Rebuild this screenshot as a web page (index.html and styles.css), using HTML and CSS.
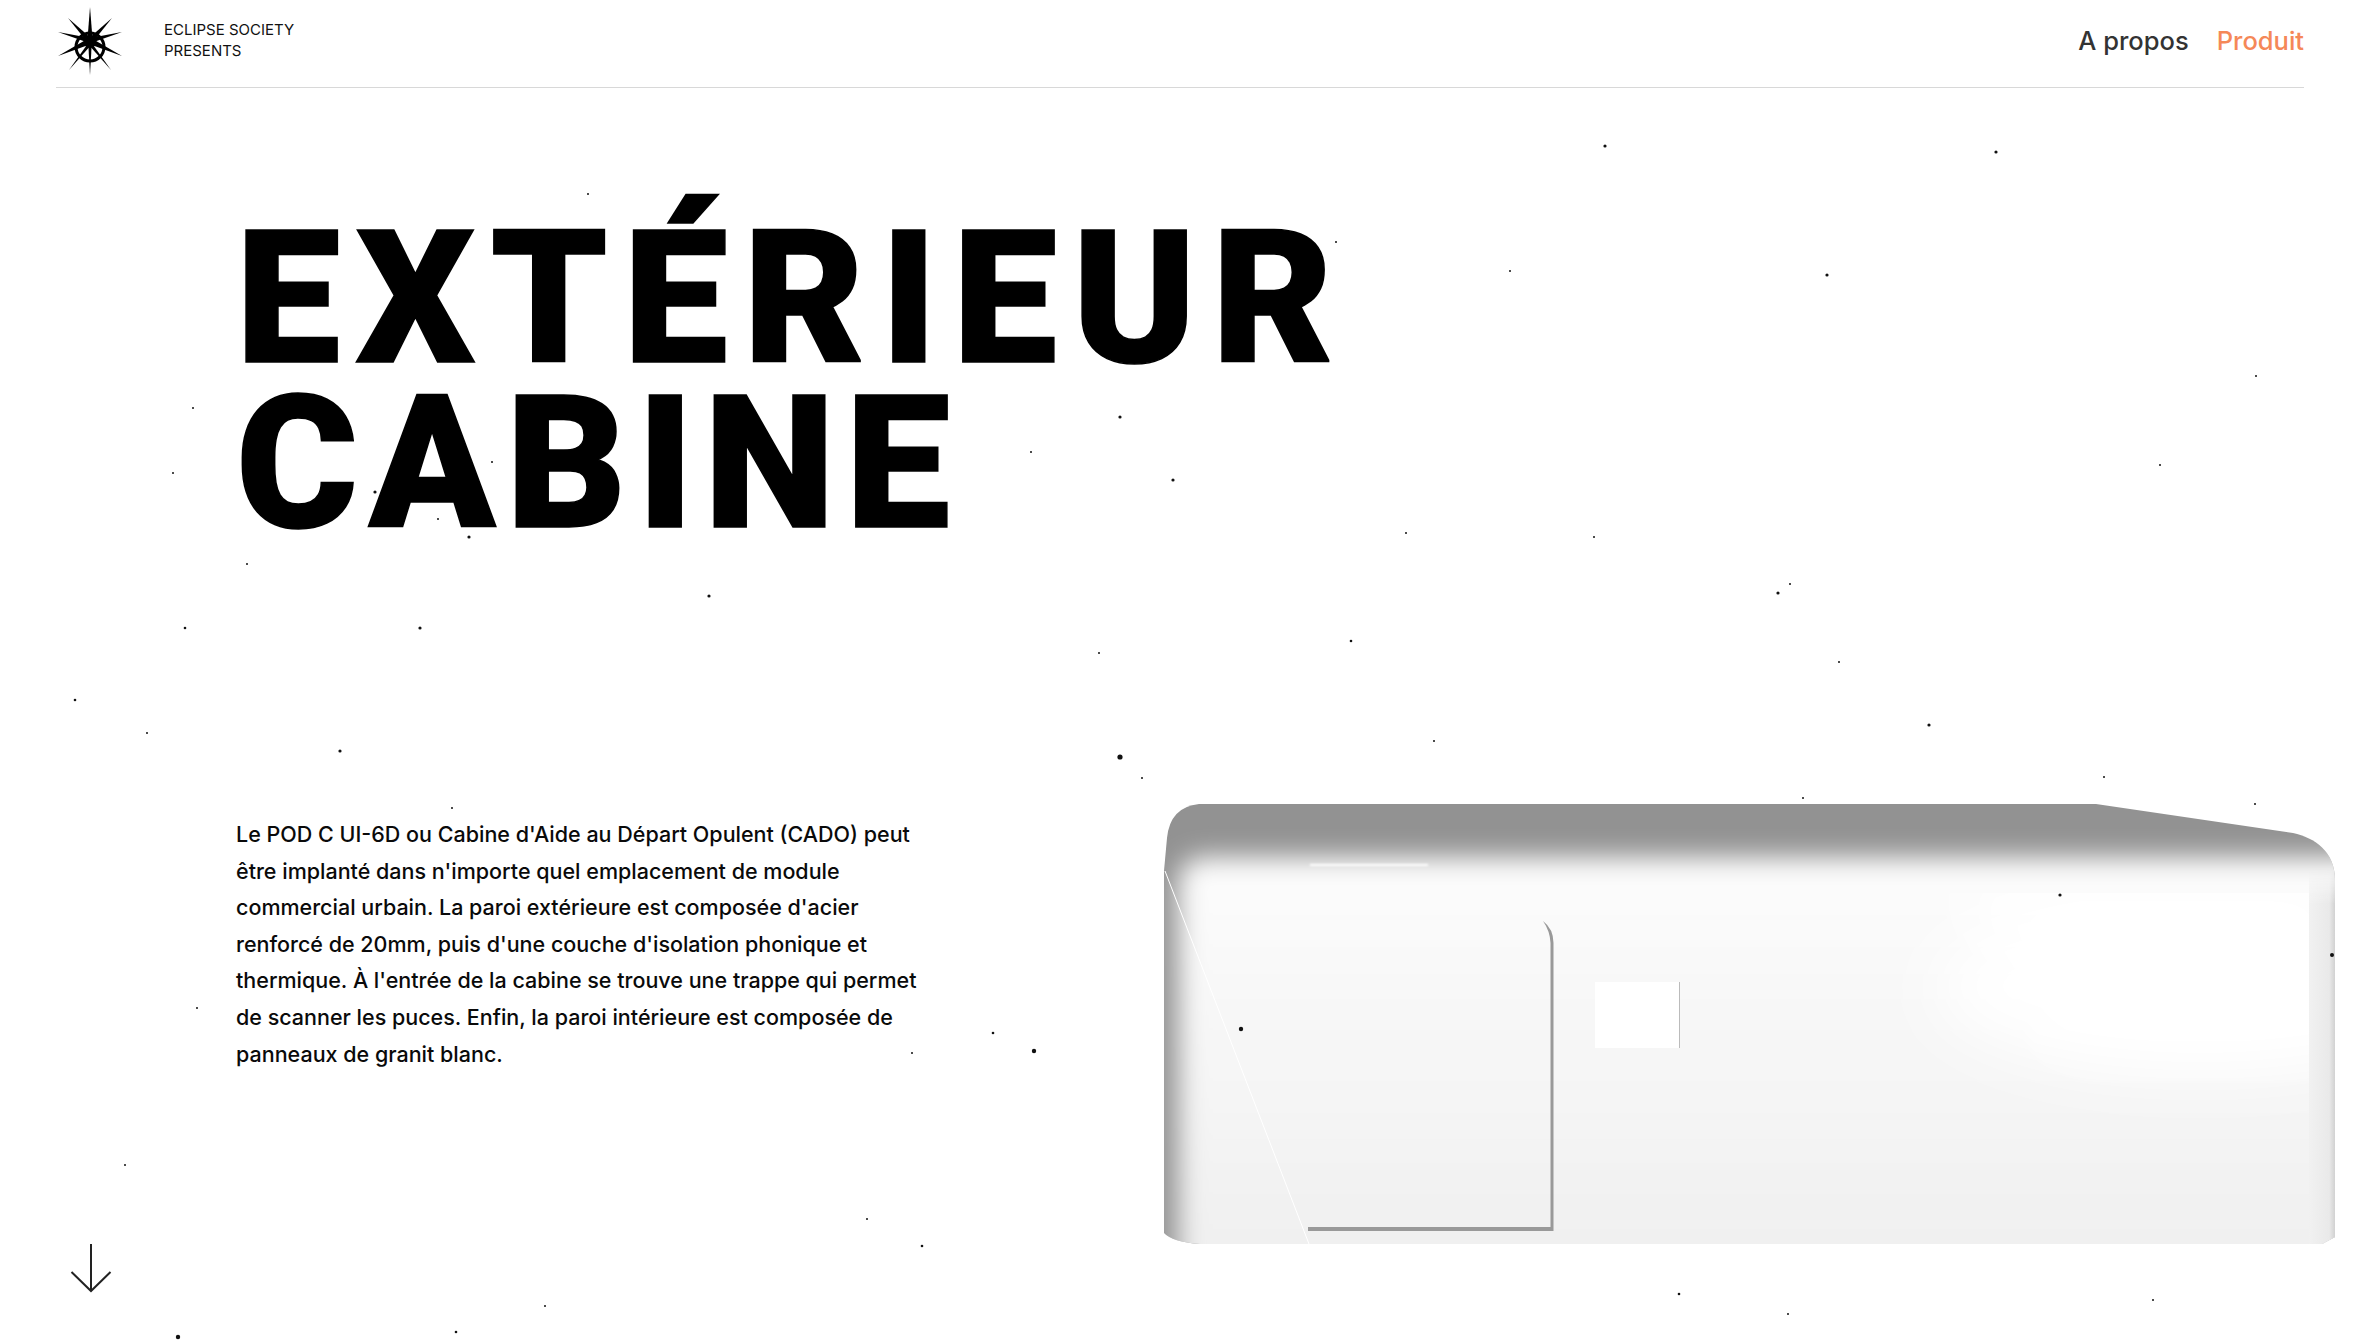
FILE: index.html
```html
<!DOCTYPE html>
<html lang="fr">
<head>
  <meta charset="UTF-8">
  <meta name="viewport" content="width=device-width, initial-scale=1.0">
  <title>Eclipse Society - Extérieur cabine</title>
  <link rel="stylesheet" href="styles.css">
</head>
<body>
  <!-- starfield -->
  <svg class="stars" viewBox="0 0 2360 1344" fill="#111">
    <circle cx="1605" cy="146" r="1.600"/><circle cx="1996" cy="152" r="1.600"/><circle cx="588" cy="194" r="1"/><circle cx="1336" cy="242" r="1"/>
    <circle cx="1510" cy="271" r="1"/><circle cx="1827" cy="275" r="1.600"/><circle cx="2256" cy="376" r="1"/><circle cx="193" cy="408" r="1"/>
    <circle cx="1120" cy="417" r="1.600"/><circle cx="1031" cy="452" r="1"/><circle cx="173" cy="473" r="1"/><circle cx="2160" cy="465" r="1"/>
    <circle cx="1173" cy="480" r="1.600"/><circle cx="375" cy="492" r="1.600"/><circle cx="492" cy="462" r="1"/><circle cx="438" cy="519" r="1"/>
    <circle cx="469" cy="537" r="1.600"/><circle cx="1406" cy="533" r="1"/><circle cx="1594" cy="537" r="1"/><circle cx="247" cy="564" r="1"/>
    <circle cx="1790" cy="584" r="1"/><circle cx="1778" cy="593" r="1.600"/><circle cx="709" cy="596" r="1.600"/><circle cx="420" cy="628" r="1.600"/>
    <circle cx="185" cy="628" r="1.300"/><circle cx="1351" cy="641" r="1.300"/><circle cx="1099" cy="653" r="1"/><circle cx="1839" cy="662" r="1"/>
    <circle cx="75" cy="700" r="1.300"/><circle cx="1929" cy="725" r="1.600"/><circle cx="147" cy="733" r="1"/><circle cx="1434" cy="741" r="1"/>
    <circle cx="340" cy="751" r="1.600"/><circle cx="1120" cy="757" r="2.600"/><circle cx="1142" cy="778" r="1"/><circle cx="2104" cy="777" r="1"/>
    <circle cx="1803" cy="798" r="1"/><circle cx="2255" cy="804" r="1"/><circle cx="452" cy="808" r="1"/><circle cx="2060" cy="895" r="1.600"/>
    <circle cx="2332" cy="955" r="2"/><circle cx="1241" cy="1029" r="2.200"/><circle cx="197" cy="1008" r="1"/><circle cx="993" cy="1033" r="1.300"/>
    <circle cx="1034" cy="1051" r="2.200"/><circle cx="912" cy="1053" r="1"/><circle cx="125" cy="1165" r="1"/><circle cx="867" cy="1219" r="1"/>
    <circle cx="922" cy="1246" r="1.300"/><circle cx="1679" cy="1294" r="1.300"/><circle cx="2153" cy="1300" r="1"/><circle cx="545" cy="1306" r="1"/>
    <circle cx="1788" cy="1314" r="1"/><circle cx="178" cy="1337" r="2.200"/><circle cx="456" cy="1332" r="1.300"/>
  </svg>

  <header class="site-header">
    <a class="brand" href="#">
      <svg class="brand-logo" viewBox="0 0 68 68" fill="#000">
        <g>
          <polygon points="34,0 36.500,32 31.500,32"/>
          <polygon points="34,68 36,32 32,32"/>
          <polygon points="2,25 34,31 33,36"/>
          <polygon points="66,25 34,31 35,36"/>
          <polygon points="2,49 33,31 35,37"/>
          <polygon points="66,49 35,31 33,37"/>
          <polygon points="12,11 36,32 32,36"/>
          <polygon points="56,11 32,32 36,36"/>
          <polygon points="13,63 33,35 36,37"/>
          <polygon points="55,63 35,35 32,37"/>
        </g>
        <circle cx="34" cy="40" r="14" fill="none" stroke="#000" stroke-width="3"/>
        <circle cx="34" cy="35" r="6"/>
      </svg>
      <span class="brand-name">ECLIPSE SOCIETY<br>PRESENTS</span>
    </a>
    <nav class="site-nav">
      <a href="#">A propos</a>
      <a class="active" href="#">Produit</a>
    </nav>
  </header>

  <main class="content">
    <h1 class="title">
      <span class="title-top">EXTÉRIEUR</span>
      <span class="title-bottom">CABINE</span>
    </h1>

    <div class="detail">
      <p class="detail-text">
        Le POD C UI-6D ou Cabine d'Aide au Départ Opulent (CADO) peut<br>
        être implanté dans n'importe quel emplacement de module<br>
        commercial urbain. La paroi extérieure est composée d'acier<br>
        renforcé de 20mm, puis d'une couche d'isolation phonique et<br>
        thermique. À l'entrée de la cabine se trouve une trappe qui permet<br>
        de scanner les puces. Enfin, la paroi intérieure est composée de<br>
        panneaux de granit blanc.
      </p>

      <!-- cabin render -->
      <svg class="cabin" viewBox="1160 800 1176 446">
        <defs>
          <clipPath id="cabinShape">
            <path d="M1199 803 L2096 803 L2293 832 C2315 837 2335 850 2335 880 L2335 1236 L2322 1243 L1200 1243 Q1172 1241 1164 1232 L1164 870 L1167 837 Q1170 806 1199 803 Z"/>
          </clipPath>
          <clipPath id="glowShape"><rect x="1160" y="892" width="1149" height="354"/></clipPath>
          <linearGradient id="faceFill" x1="0" y1="0" x2="0" y2="1">
            <stop offset="0" stop-color="#fcfcfc"/>
            <stop offset="1" stop-color="#eeeeee"/>
          </linearGradient>
          <linearGradient id="sideFill" x1="0" y1="0" x2="1" y2="0">
            <stop offset="0" stop-color="#f1f1f1"/>
            <stop offset="0.75" stop-color="#e9e9e9"/>
            <stop offset="1" stop-color="#cdcdcd"/>
          </linearGradient>
          <linearGradient id="sideFade" x1="0" y1="0" x2="0" y2="1">
            <stop offset="0" stop-color="#000"/>
            <stop offset="0.1" stop-color="#fff"/>
          </linearGradient>
          <mask id="sideMask" maskUnits="userSpaceOnUse" x="2309" y="865" width="27" height="380">
            <rect x="2309" y="865" width="27" height="380" fill="url(#sideFade)"/>
          </mask>
          <filter id="blurFace" x="-5%" y="-10%" width="110%" height="120%"><feGaussianBlur stdDeviation="13"/></filter>
          <filter id="blurGlow" x="-30%" y="-50%" width="160%" height="200%"><feGaussianBlur stdDeviation="30"/></filter>
          <filter id="blurSoft" x="-10%" y="-300%" width="120%" height="700%"><feGaussianBlur stdDeviation="1"/></filter>
        </defs>
        <g clip-path="url(#cabinShape)">
          <rect x="1160" y="800" width="1180" height="446" fill="#929292"/>
          <rect x="1178" y="856" width="1222" height="460" rx="26" fill="url(#faceFill)" filter="url(#blurFace)"/>
          <g clip-path="url(#glowShape)">
            <ellipse cx="2200" cy="985" rx="265" ry="85" fill="#fff" filter="url(#blurGlow)"/>
            <path d="M1960 880 L2340 880 L2340 1040 L2060 1040 Z" fill="#fff" filter="url(#blurGlow)"/>
          </g>
          <rect x="2309" y="865" width="27" height="380" fill="url(#sideFill)" mask="url(#sideMask)"/>
        </g>
        <line x1="1165" y1="870" x2="1309" y2="1243" stroke="#fff" stroke-width="1"/>
        <rect x="1310" y="863" width="118" height="2" fill="#fff" filter="url(#blurSoft)"/>
        <path d="M1543 920 Q1553.500 928 1553.500 942 L1553.500 1230 L1308 1230 L1308 1226 L1550.500 1226 L1550.500 942 Q1550 930 1543 920 Z" fill="#999"/>
        <rect x="1595" y="981" width="84" height="66" fill="#fff"/>
        <rect x="1679" y="981" width="1" height="66" fill="#bbb"/>
      </svg>
    </div>
  </main>

  <svg class="scroll-arrow" viewBox="0 0 42 50" fill="none" stroke="#222" stroke-width="2">
    <path d="M21 1 V48 M1.500 29 L21 48 L40.500 29"/>
  </svg>
</body>
</html>
```

FILE: styles.css
```css
/* Reset default styles */
* {
    margin: 0;
    padding: 0;
    box-sizing: border-box;
}

body {
    position: relative;
    height: 1344px;
    overflow: hidden;
    background: #fff;
    color: #000;
    font-family: "Inter", sans-serif;
}

a {
    color: inherit;
    text-decoration: none;
}

/* Background dots */
.stars {
    position: absolute;
    top: 0;
    left: 0;
    width: 2360px;
    height: 1344px;
    z-index: 1;
}

/* Header */
.site-header {
    display: flex;
    justify-content: space-between;
    align-items: center;
    height: 88px;
    margin: 0 56px;
    border-bottom: 1px solid #d8d8d8;
}

.brand {
    display: flex;
    align-items: center;
    gap: 40px;
}

.brand-logo {
    display: block;
    width: 68px;
    height: 68px;
    margin: 0 0 6px 0;
}

.brand-name {
    font-size: 15px;
    line-height: 21px;
    color: #111;
    margin-bottom: 8px;
}

.site-nav {
    display: flex;
    gap: 28px;
    font-size: 25.500px;
    font-weight: 500;
    color: #333;
    margin-bottom: 6px;
}

.site-nav .active {
    color: #f58858;
}

/* Main content */
.content {
    padding-left: 236px;
}

.title {
    position: relative;
    z-index: 2;
    margin-top: 128px;
    font-family: "Roboto", sans-serif;
    font-size: 186px;
    font-weight: 900;
    line-height: 165px;
    -webkit-text-stroke: 1.500px #000;
}

.title-top,
.title-bottom {
    display: block;
}

.title-top {
    letter-spacing: 15.800px;
}

.title-bottom {
    letter-spacing: 10.800px;
}

.detail {
    display: flex;
    justify-content: space-between;
    align-items: flex-start;
    margin-top: 255px;
}

.detail-text {
    position: relative;
    z-index: 2;
    padding-top: 15px;
    font-size: 21.500px;
    font-weight: 500;
    line-height: 36.600px;
    color: #0a0a0a;
}

.cabin {
    display: block;
    flex: none;
    width: 1176px;
    height: 446px;
    margin-right: 24px;
}

/* Scroll hint */
.scroll-arrow {
    position: absolute;
    left: 70px;
    top: 1243px;
    width: 42px;
    height: 50px;
}
```
